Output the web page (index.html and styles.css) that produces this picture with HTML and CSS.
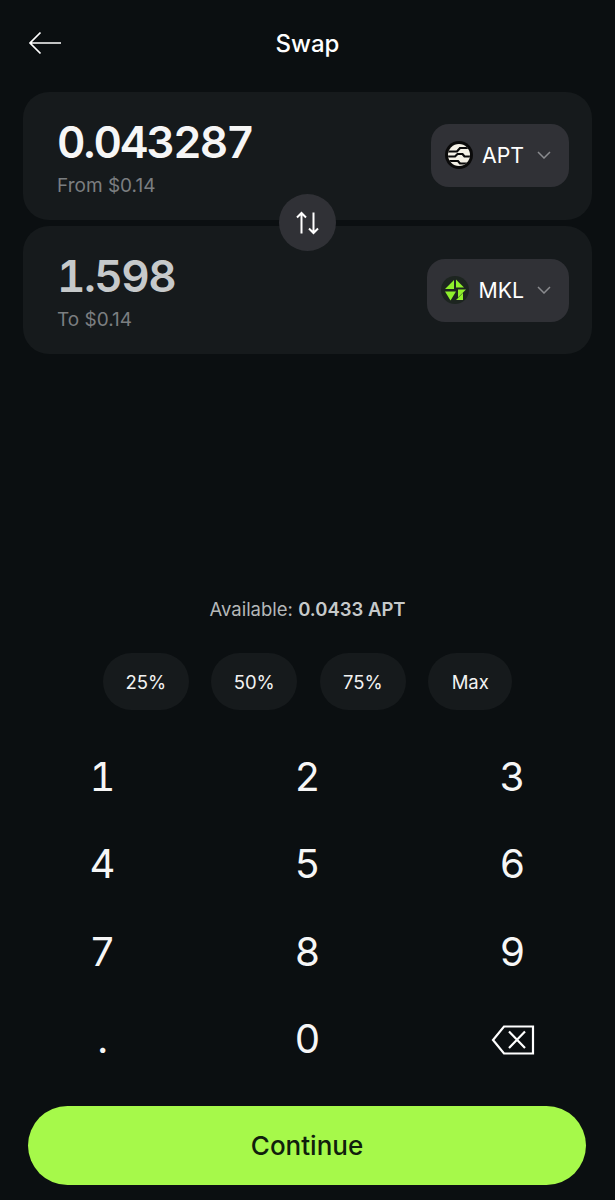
FILE: index.html
```html
<!DOCTYPE html>
<html lang="en">
<head>
  <meta charset="UTF-8" />
  <meta name="viewport" content="width=device-width, initial-scale=1.0" />
  <title>Swap</title>
  <link rel="stylesheet" href="styles.css">
</head>
<body>
  <div class="screen">
    <header class="top-bar">
      <svg class="back-icon" width="34" height="24" viewBox="0 0 34 24" fill="none" stroke="#fff" stroke-width="1.7">
        <path d="M33 12H2M12.500 1.500L2 12l10.500 10.500"/>
      </svg>
      <h1 class="title">Swap</h1>
    </header>

    <section class="swap-cards">
      <div class="swap-card">
        <div class="amount-block">
          <div class="amount">0.043287</div>
          <div class="amount-sub">From $0.14</div>
        </div>
        <div class="token-select">
          <svg class="token-icon" viewBox="0 0 28 28">
            <defs>
              <clipPath id="aptClip"><circle cx="14" cy="14" r="11"/></clipPath>
            </defs>
            <circle cx="14" cy="14" r="14" fill="#0a0a0a"/>
            <circle cx="14" cy="14" r="11" fill="#f4f1e6"/>
            <path clip-path="url(#aptClip)" d="M2 10.500h10l3-3.500h11M2 15.500h8l2.500-2.500h5l2 2.500h7M2 20h11l2 2.500h11" fill="none" stroke="#0a0a0a" stroke-width="2.200"/>
          </svg>
          <span class="token-name">APT</span>
          <svg class="chevron" width="14" height="8" viewBox="0 0 14 8" fill="none" stroke="#8a8b8f" stroke-width="1.500">
            <path d="M1 1l6 6 6-6"/>
          </svg>
        </div>
      </div>

      <div class="swap-card swap-card-to">
        <div class="amount-block">
          <div class="amount amount-to">1.598</div>
          <div class="amount-sub">To $0.14</div>
        </div>
        <div class="token-select">
          <svg class="token-icon" viewBox="0 0 28 28">
            <circle cx="14" cy="14" r="14" fill="#1d2520"/>
            <path d="M4 13l9-9v9zM15 3.500l8 8h-8zM17 13.500h8L17 21.500zM4 15.500h11L9.500 24.500zM22 17v7h-7z" fill="#8ff02c"/>
          </svg>
          <span class="token-name">MKL</span>
          <svg class="chevron" width="14" height="8" viewBox="0 0 14 8" fill="none" stroke="#8a8b8f" stroke-width="1.500">
            <path d="M1 1l6 6 6-6"/>
          </svg>
        </div>
      </div>

      <div class="flip-button">
        <svg width="24" height="24" viewBox="0 0 24 24" fill="none" stroke="#fff" stroke-width="2">
          <path d="M5.500 22.500V2M1 6.500L5.500 2 10 6.500M17.500 1.500V22M13 17.500l4.500 4.500 4.500-4.500"/>
        </svg>
      </div>
    </section>

    <div class="available">Available: <b>0.0433 APT</b></div>

    <div class="percent-row">
      <button class="pill">25%</button>
      <button class="pill">50%</button>
      <button class="pill">75%</button>
      <button class="pill pill-max">Max</button>
    </div>

    <div class="keypad">
      <div class="key">1</div>
      <div class="key">2</div>
      <div class="key">3</div>
      <div class="key">4</div>
      <div class="key">5</div>
      <div class="key">6</div>
      <div class="key">7</div>
      <div class="key">8</div>
      <div class="key">9</div>
      <div class="key">.</div>
      <div class="key">0</div>
      <div class="key">
        <svg class="backspace" width="44" height="30" viewBox="0 0 44 30" fill="none" stroke="#fff" stroke-width="2.200">
          <path d="M42 1.500H13L2 15l11 13.500h29z"/>
          <path d="M18 6.500l16 16.500M34 6.500L18 23"/>
        </svg>
      </div>
    </div>

    <button class="continue">Continue</button>
  </div>
</body>
</html>
```

FILE: styles.css
```css
* {
  box-sizing: border-box;
}

body {
  margin: 0;
  background-color: #0b0f11;
  color: #fff;
  font-family: Inter, "Noto Sans", sans-serif;
  overflow: hidden;
}

.screen {
  display: flex;
  flex-direction: column;
  height: 1200px;
}

.top-bar {
  position: relative;
  height: 92px;
  padding: 31px 0 0 28px;
}

.back-icon {
  display: block;
}

.title {
  position: absolute;
  top: 29px;
  left: 0;
  right: 0;
  margin: 0;
  text-align: center;
  font-size: 24px;
  line-height: 30px;
  font-weight: 500;
}

.swap-cards {
  position: relative;
  display: flex;
  flex-direction: column;
  gap: 6px;
  margin: 0 23px;
}

.swap-card {
  display: flex;
  justify-content: space-between;
  align-items: center;
  height: 128px;
  padding: 0 23px 2px 34px;
  background-color: #161a1c;
  border-radius: 26px;
}

.swap-card-to .token-select {
  margin-top: 2px;
}

.amount-block {
  padding-top: 3px;
}

.amount {
  font-size: 44px;
  line-height: 52px;
  font-weight: 600;
  letter-spacing: -1.900px;
  font-variant-numeric: tabular-nums;
  color: #f6f6f6;
}

.amount-to {
  color: #c6c9ca;
  letter-spacing: -1.500px;
}

.amount-sub {
  margin-top: 7px;
  font-size: 19px;
  line-height: 22px;
  color: #7b7e80;
}

.token-select {
  display: flex;
  align-items: center;
  height: 63px;
  padding: 0 18px 0 14px;
  background-color: #303136;
  border-radius: 18px;
}

.token-icon {
  width: 28px;
  height: 28px;
  margin-right: 9px;
}

.token-name {
  font-size: 21.300px;
  margin-right: 13px;
}

.flip-button {
  position: absolute;
  top: 102px;
  left: 256px;
  display: flex;
  align-items: center;
  justify-content: center;
  width: 57px;
  height: 57px;
  background-color: #303136;
  border-radius: 50%;
}

.available {
  margin-top: 243px;
  text-align: center;
  font-size: 18.500px;
  line-height: 24px;
  color: #b5b8b9;
}

.available b {
  font-weight: 600;
  color: #c6c9ca;
}

.percent-row {
  display: flex;
  justify-content: center;
  gap: 22.500px;
  margin-top: 32px;
}

.pill {
  width: 86px;
  height: 57px;
  padding: 0;
  border: 0;
  border-radius: 29px;
  background-color: #161a1c;
  color: #f2f2f2;
  font-family: inherit;
  font-size: 18.500px;
  font-weight: 400;
}

.pill-max {
  width: 84px;
}

.keypad {
  display: grid;
  grid-template-columns: repeat(3, 1fr);
  grid-auto-rows: 87.500px;
  margin-top: 22.500px;
}

.key {
  display: flex;
  align-items: center;
  justify-content: center;
  font-size: 40px;
  font-weight: 400;
  font-variant-numeric: tabular-nums;
  color: #f6f6f6;
}

.backspace {
  margin-top: 3px;
}

.continue {
  display: block;
  width: 558px;
  height: 79px;
  margin: 23.500px 0 0 28px;
  border: 0;
  border-radius: 40px;
  background-color: #a6f94a;
  color: #10200c;
  font-family: inherit;
  font-size: 26px;
  font-weight: 500;
}
```
